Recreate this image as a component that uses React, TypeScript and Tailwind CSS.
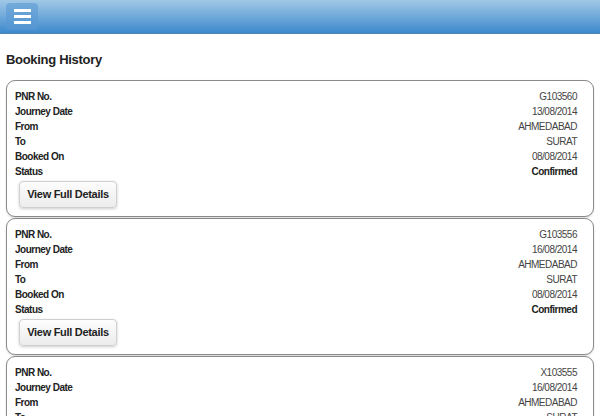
const bookings = [
  { pnr: "G103560", journey: "13/08/2014", from: "AHMEDABAD", to: "SURAT", booked: "08/08/2014", status: "Confirmed" },
  { pnr: "G103556", journey: "16/08/2014", from: "AHMEDABAD", to: "SURAT", booked: "08/08/2014", status: "Confirmed" },
  { pnr: "X103555", journey: "16/08/2014", from: "AHMEDABAD", to: "SURAT", booked: "08/08/2014", status: "Confirmed" },
];

type Booking = (typeof bookings)[number];

const Row = ({ label, value, bold }: { label: string; value: string; bold?: boolean }) => (
  <div className="flex items-center justify-between h-[15px] text-[10px] tracking-[-0.5px]">
    <span className="font-bold text-[#222]">{label}</span>
    <span className={bold ? "font-bold text-[#222]" : "text-[#444]"}>{value}</span>
  </div>
);

const BookingCard = ({ b }: { b: Booking }) => (
  <div className="border border-[#8a8a8a] rounded-[9px] bg-white pl-2 pr-4 pt-2 pb-[8px] mb-[1px] shadow-[0_1px_2px_rgba(0,0,0,0.15)]">
    <Row label="PNR No." value={b.pnr} />
    <Row label="Journey Date" value={b.journey} />
    <Row label="From" value={b.from} />
    <Row label="To" value={b.to} />
    <Row label="Booked On" value={b.booked} />
    <Row label="Status" value={b.status} bold />
    <button className="mt-[2px] ml-1 h-[27px] w-[98px] rounded-[4px] border border-[#d0d0d0] bg-gradient-to-b from-[#fdfdfd] to-[#ececec] shadow-[0_1px_3px_rgba(0,0,0,0.2)] font-bold text-[11px] tracking-[-0.3px] text-[#222]">
      View Full Details
    </button>
  </div>
);

export default function App() {
  return (
    <div className="w-[600px] h-[416px] overflow-hidden bg-white font-['Liberation_Sans',Arial,sans-serif] text-[11px]">
      {/* top bar */}
      <div className="h-[34px] bg-gradient-to-b from-[#a0c8e6] to-[#3b89cd] border-b border-[#4f86b6] flex items-center px-[6px]">
        <button className="w-[32px] h-[27px] rounded-[4px] bg-[#5a9ad4]/60 flex flex-col items-center justify-center gap-[3px]">
          <span className="block w-[17px] h-[3px] bg-white" />
          <span className="block w-[17px] h-[3px] bg-white" />
          <span className="block w-[17px] h-[3px] bg-white" />
        </button>
      </div>

      <h1 className="px-[6px] pt-[18px] pb-[13px] text-[13px] tracking-[-0.3px] font-bold text-[#222] leading-[15px]">Booking History</h1>

      <div className="px-[6px]">
        {bookings.map((b) => (
          <BookingCard key={b.pnr} b={b} />
        ))}
      </div>
    </div>
  );
}
